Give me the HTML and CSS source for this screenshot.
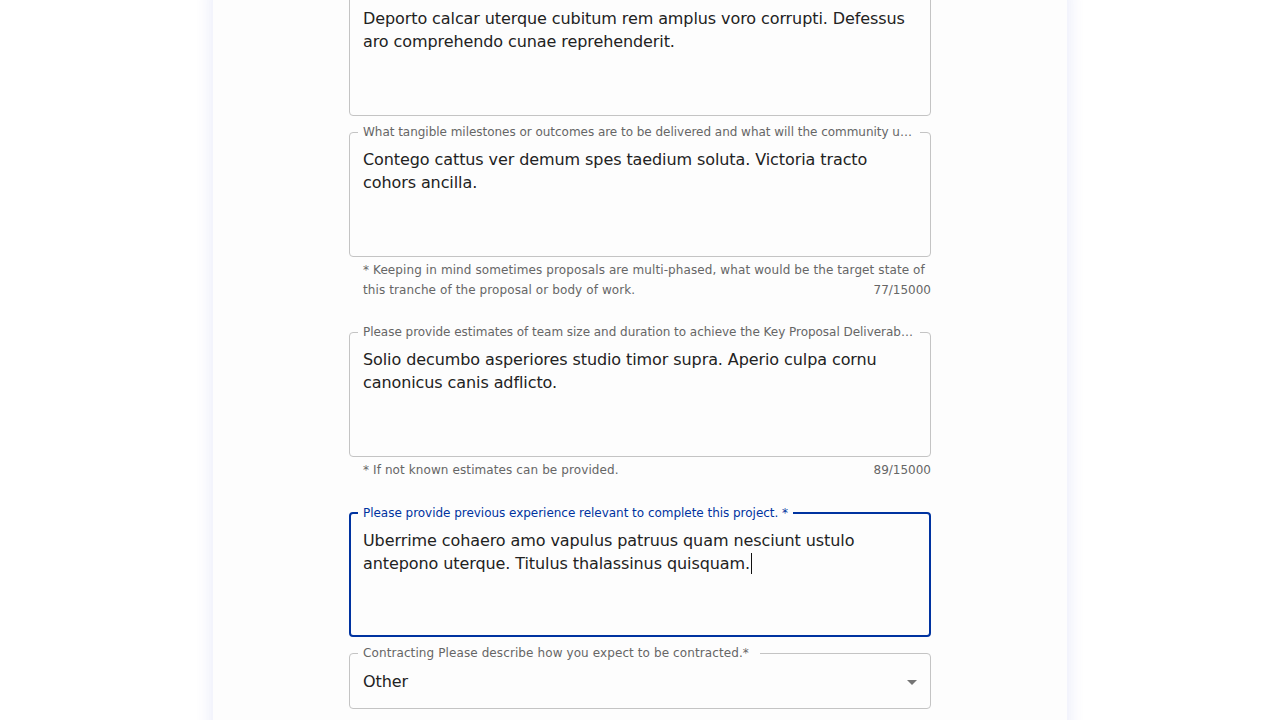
FILE: index.html
```html
<!DOCTYPE html>
<html lang="en">
<head>
<meta charset="utf-8">
<title>Proposal form</title>
<link rel="stylesheet" href="styles.css">
</head>
<body>
<main class="card">
  <form class="form">
    <div class="field">
      <div class="box">
        <span class="label">Please describe the problem this proposal solves. *</span>
        <div class="value">Deporto calcar uterque cubitum rem amplus voro corrupti. Defessus aro comprehendo cunae reprehenderit.</div>
      </div>
    </div>

    <div class="field">
      <div class="box">
        <span class="label">What tangible milestones or outcomes are to be delivered and what will the community ultimately receive? *</span>
        <div class="value">Contego cattus ver demum spes taedium soluta. Victoria tracto cohors ancilla.</div>
      </div>
      <div class="helper">
        <span class="helper-text">* Keeping in mind sometimes proposals are multi-phased, what would be the target state of this tranche of the proposal or body of work.</span>
        <span class="counter">77/15000</span>
      </div>
    </div>

    <div class="field">
      <div class="box">
        <span class="label">Please provide estimates of team size and duration to achieve the Key Proposal Deliverables outlined above. *</span>
        <div class="value">Solio decumbo asperiores studio timor supra. Aperio culpa cornu canonicus canis adflicto.</div>
      </div>
      <div class="helper">
        <span class="helper-text">* If not known estimates can be provided.</span>
        <span class="counter">89/15000</span>
      </div>
    </div>

    <div class="field">
      <div class="box focused">
        <span class="label">Please provide previous experience relevant to complete this project. *</span>
        <div class="value">Uberrime cohaero amo vapulus patruus quam nesciunt ustulo antepono uterque. Titulus thalassinus quisquam.<span class="caret"></span></div>
      </div>
    </div>

    <div class="field">
      <div class="box select">
        <span class="label">Contracting Please describe how you expect to be contracted.*</span>
        <div class="value">Other</div>
        <svg class="arrow" viewBox="0 0 24 24" width="24" height="24" aria-hidden="true"><path d="M7 10l5 5 5-5z"/></svg>
      </div>
    </div>
  </form>
</main>
</body>
</html>
```
FILE: styles.css
```css
html, body {
  margin: 0;
  background: #ffffff;
}

body {
  font-family: "DejaVu Sans", sans-serif;
  color: #222222;
  overflow: hidden;
}

.card {
  width: 854px;
  margin: -9px auto 0;
  min-height: 760px;
  background: #fdfdfd;
  box-shadow: 0 0 14px 3px rgba(70, 90, 210, 0.11);
}

.form {
  width: 582px;
  margin: 0 auto;
  display: flex;
  flex-direction: column;
  gap: 16px;
}

.field {
  display: flex;
  flex-direction: column;
}

.box {
  position: relative;
  box-sizing: border-box;
  height: 125px;
  border: 1px solid #c4c4c4;
  border-radius: 4px;
  padding: 14.5px 13px;
}

.box.focused {
  border: 2px solid #0033a0;
  padding: 14.5px 12px;
}

.box.select {
  height: 56px;
  display: flex;
  align-items: center;
  justify-content: space-between;
  padding: 1px 6px 0 13px;
}

.label {
  position: absolute;
  top: -8px;
  left: 8px;
  max-width: calc(100% - 28px);
  padding: 0 5px;
  background: #fdfdfd;
  font-size: 12px;
  line-height: 15px;
  letter-spacing: -0.03px;
  color: #666666;
  white-space: nowrap;
  overflow: hidden;
  text-overflow: ellipsis;
}

.focused .label {
  top: -8px;
  left: 7px;
  color: #0033a0;
}

.select .label {
  padding-right: 11px;
  letter-spacing: 0.1px;
}

.value {
  font-size: 16px;
  line-height: 23px;
  letter-spacing: -0.09px;
  color: #222222;
}

.caret {
  display: inline-block;
  width: 1px;
  height: 21px;
  margin-left: 1px;
  vertical-align: -5px;
  background: #111111;
}

.arrow {
  fill: #757575;
}

.helper {
  display: grid;
  margin: 3px 0 16px;
  font-size: 12px;
  line-height: 20px;
  letter-spacing: 0.1px;
  color: #666666;
}

.helper-text,
.counter {
  grid-area: 1 / 1;
}

.helper-text {
  padding: 0 0 0 14px;
}

.counter {
  justify-self: end;
  align-self: end;
  letter-spacing: 0;
}
```
